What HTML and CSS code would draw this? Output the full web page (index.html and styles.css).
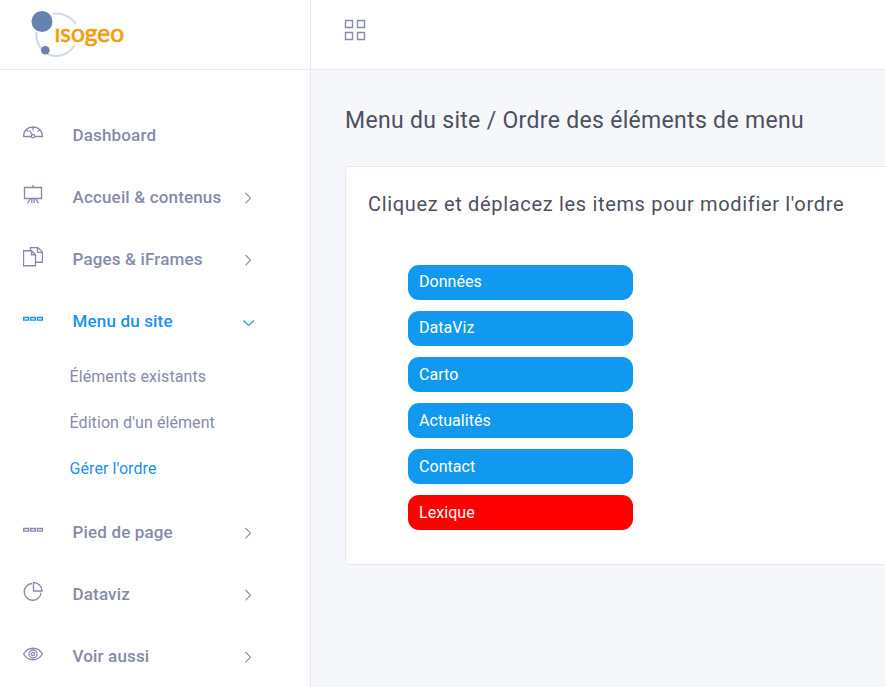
FILE: index.html
```html
<!DOCTYPE html>
<html lang="fr">
<head>
<meta charset="utf-8">
<title>Menu du site</title>
<link rel="stylesheet" href="styles.css">
</head>
<body>
<svg class="defs" width="0" height="0">
  <symbol id="right" viewBox="0 0 12 12"><path d="M3.5 1 8.5 6.2 3.5 11.4"/></symbol>
  <symbol id="down" viewBox="0 0 12 12"><path d="M1.500 4.500 6.700 9.500 11.900 4.500"/></symbol>
  <symbol id="items" viewBox="0 0 20 20"><path d="M.7 8.500h4.800v2.600H.7zM7.600 8.500h4.800v2.600H7.600zM14.500 8.500h4.800v2.600h-4.800z"/></symbol>
</svg>
<div class="app">
  <aside class="sidebar">
    <div class="brand">
      <svg class="logo" width="100" height="50" viewBox="28 8 100 50">
        <path class="ring" d="M53 13.700C62 12.500 71 16.500 76 24M36.500 32C35 44 44 56.500 57 56C65 55.500 71 51 75 45"/>
        <circle class="ball" cx="42" cy="21.500" r="10.500"/>
        <circle class="ball" cx="45.300" cy="50.300" r="4.300"/>
        <text x="54.500" y="41.500" textLength="69.500" lengthAdjust="spacingAndGlyphs">ısogeo</text>
      </svg>
    </div>
    <nav class="nav">
      <a class="row"><svg class="icon" viewBox="0 0 20 20"><path d="M8 13.500H.6C.6 7.500 4.500 4 10 4s9.400 3.500 9.400 9.500H12M10 4v3.500M3.500 7l2 1.700M16.500 7l-2 1.700M6.500 7.500l3 4.500"/><circle cx="10" cy="13.200" r="1.700"/></svg><span class="label">Dashboard</span></a>
      <a class="row"><svg class="icon" viewBox="0 0 20 20"><path d="M1.500 2.500h17v11h-17zM10 0v2.500M7.500 13.500l-3 5M8.800 14v4M11.200 14v4M12.500 13.500l3 5"/></svg><span class="label">Accueil &amp; contenus</span><svg class="arrow"><use href="#right"/></svg></a>
      <a class="row"><svg class="icon" viewBox="0 0 20 20"><path d="M.5 3.700h8l4 4v11H.5zM8.500 3.700v4h4M7.500 3.500V.600h7.500l4.500 4.500v10.200h-7M14.500.600v4.700h5"/></svg><span class="label">Pages &amp; iFrames</span><svg class="arrow"><use href="#right"/></svg></a>
      <a class="row active"><svg class="icon"><use href="#items"/></svg><span class="label">Menu du site</span><svg class="arrow"><use href="#down"/></svg></a>
      <div class="submenu">
        <a><span>Éléments existants</span></a>
        <a><span>Édition d'un élément</span></a>
        <a class="active"><span>Gérer l'ordre</span></a>
      </div>
      <a class="row"><svg class="icon"><use href="#items"/></svg><span class="label">Pied de page</span><svg class="arrow"><use href="#right"/></svg></a>
      <a class="row"><svg class="icon" viewBox="0 0 20 20"><path d="M9 1.500A8.400 8.400 0 1 0 18 10.700M10.500.600v8.400h8.600A8.600 8.600 0 0 0 10.500.600z"/></svg><span class="label">Dataviz</span><svg class="arrow"><use href="#right"/></svg></a>
      <a class="row"><svg class="icon" viewBox="0 0 20 20"><path d="M.6 10C5 2.300 15 2.300 19.400 10C15 17.700 5 17.700.6 10z"/><circle cx="10" cy="10" r="4"/><circle cx="10" cy="10" r="1.600"/></svg><span class="label">Voir aussi</span><svg class="arrow"><use href="#right"/></svg></a>
    </nav>
  </aside>
  <div class="content">
    <header class="topbar">
      <svg width="22" height="22" viewBox="0 0 22 22"><path d="M1.500 1.500h7v7h-7zM13.500 1.500h7v7h-7zM1.500 13.500h7v7h-7zM13.500 13.500h7v7h-7z"/></svg>
    </header>
    <main>
      <h1><span>Menu du site / Ordre des éléments de menu</span></h1>
      <section class="card">
        <h2><span>Cliquez et déplacez les items pour modifier l'ordre</span></h2>
        <ul class="order">
          <li>Données</li>
          <li>DataViz</li>
          <li>Carto</li>
          <li>Actualités</li>
          <li>Contact</li>
          <li class="last">Lexique</li>
        </ul>
      </section>
    </main>
  </div>
</div>
</body>
</html>
```
FILE: styles.css
```css
* { box-sizing: border-box; }
body { margin: 0; font-family: Roboto, sans-serif; background: #f5f7fb; overflow: hidden; }
.defs { display: block; }
.app { display: flex; height: 687px; width: 885px; overflow: hidden; }
.sidebar { width: 311px; flex: none; background: #fff; border-right: 1px solid #e4e9f5; }
.brand { height: 70px; padding: 8px 0 0 28px; border-bottom: 1px solid #e4e9f5; }
.logo { display: block; }
.ring { fill: none; stroke: #d3d8e2; stroke-width: 2; }
.ball { fill: #6682ad; }
.logo text { font: 400 25px Lato, sans-serif; fill: #f59c0b; stroke: #f59c0b; stroke-width: .7px; }
.nav { padding-top: 34px; }
.row { display: flex; align-items: center; height: 62px; padding-left: 23px; color: #868ca8; }
.active { color: #1992ef; }
.icon { width: 20px; height: 20px; margin: 0 29.5px 5px 0; }
.icon, .arrow, .topbar svg { fill: none; stroke: currentColor; stroke-width: 1.35; }
.label { width: 169.5px; font-size: 17px; font-weight: 500; letter-spacing: .16px; }
.arrow { width: 12px; height: 12px; margin-top: 2px; stroke-width: 1.1; overflow: visible; }
.submenu { padding: 1px 0 10px 69.5px; height: 149px; color: #868ca8; }
.submenu a { display: flex; align-items: center; height: 46px; font-size: 16px; letter-spacing: .08px; }
.submenu .active { color: #1992ef; }
.content { flex: 1; min-width: 0; }
.topbar { height: 70px; padding: 19px 0 0 33px; background: #fff; border-bottom: 1px solid #e4e9f5; color: #868ca8; }
.topbar svg { display: block; stroke-width: 1.4; }
main { padding: 33px 0 0 34px; }
h1, h2 { margin: 0; font-weight: 400; color: #4d5060; white-space: nowrap; }
h1 { font-size: 23px; line-height: 36px; letter-spacing: .31px; }
.card { height: 399px; margin-top: 27px; padding: 22px 0 0 22px; background: #fff; border: 1px solid #e4e9f5; border-right: 0; border-radius: 5px 0 0 5px; }
h2 { font-size: 20px; line-height: 30px; letter-spacing: .67px; }
.order { display: grid; gap: 11px; margin: 46px 0 0 40px; padding: 0; list-style: none; width: 225px; }
.order li { height: 35px; padding-left: 11px; border-radius: 11px; background: #1099ee; color: #fff; font-size: 16px; line-height: 34px; letter-spacing: .05px; }
.order li:nth-child(n+3) { line-height: 36px; }
.order .last { background: #f00; }
```
